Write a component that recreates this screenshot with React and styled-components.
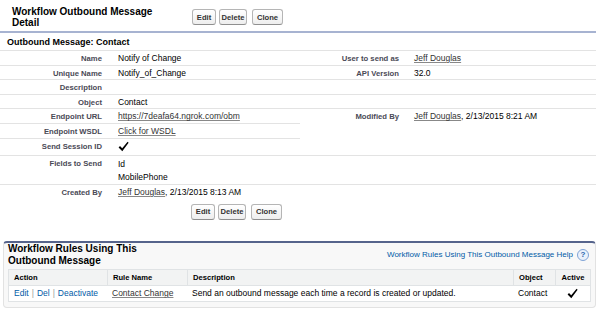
import React from 'react';
import styled, { createGlobalStyle } from 'styled-components';

const GlobalStyle = createGlobalStyle`
    body {
        margin: 0;
        background: #fff;
        font-family: "Liberation Sans", Arial, sans-serif;
        color: #000;
    }
`

const Page = styled.div`
    width: 596px;
`

const PageHeader = styled.div`
    display: flex;
    align-items: flex-start;
    height: 31px;
    border-bottom: 2px solid #a7b3d1;
`

const PageTitle = styled.h1`
    margin: 0;
    padding: 6px 0 0 12px;
    width: 160px;
    font-size: 10px;
    line-height: 11px;
    font-weight: bold;
    color: #000;
`

const ButtonRow = styled.div`
    display: flex;
    gap: 3px;
    margin-top: ${p => p.$top || 0}px;
    padding-left: ${p => p.$left || 0}px;
`

const Button = styled.button`
    box-sizing: border-box;
    width: ${p => p.$w}px;
    height: 16px;
    padding: 0;
    font-family: "Liberation Sans", Arial, sans-serif;
    font-size: 7.6px;
    font-weight: bold;
    color: #333;
    background: linear-gradient(#ffffff, #eeeeee);
    border: 1px solid #b5b5b5;
    border-bottom-color: #8f8f8f;
    border-radius: 3px;
`

const SectionTitle = styled.div`
    padding: 4px 0 2px 7px;
    font-size: 9px;
    line-height: 11px;
    font-weight: bold;
    border-bottom: 1px solid #e3e3e3;
`

const DetailGrid = styled.div`
    display: grid;
    grid-template-columns: 108px 192px 105px 1fr;
`

const Label = styled.div`
    padding: 2px 6px 0 0;
    text-align: right;
    font-size: 7.7px;
    line-height: 11.6px;
    font-weight: bold;
    color: #4a4a56;
    border-bottom: ${p => (p.$last ? 'none' : '1px solid #e3e3e3')};
    grid-row: ${p => (p.$span ? `span ${p.$span}` : 'auto')};
`

const Value = styled.div`
    padding: 2px 0 0 ${p => p.$pad || 10}px;
    font-size: 8.5px;
    line-height: ${p => p.$lh || 11.6}px;
    color: #000;
    border-bottom: ${p => (p.$last ? 'none' : '1px solid #e3e3e3')};
    grid-row: ${p => (p.$span ? `span ${p.$span}` : 'auto')};
`

const Link = styled.span`
    color: #333;
    text-decoration: underline;
    text-decoration-color: #888;
`

const Panel = styled.div`
    margin: 21px 0 0 3px;
    padding: 0 4px 5px 4px;
    background: #f8f8f8;
    border: 1px solid #e2e2e2;
    border-top: 2px solid #56648c;
    border-radius: 4px;
`

const PanelHeader = styled.div`
    display: flex;
    align-items: center;
    justify-content: space-between;
    margin-bottom: 2px;
`

const PanelTitle = styled.h2`
    margin: 0;
    width: 140px;
    font-size: 10px;
    line-height: 12px;
    font-weight: bold;
`

const HelpLink = styled.div`
    display: flex;
    align-items: center;
    gap: 4px;
    padding-right: 2px;
    font-size: 8px;
    color: #015ba7;
`

const HelpIcon = styled.span`
    box-sizing: border-box;
    display: inline-flex;
    align-items: center;
    justify-content: center;
    width: 12px;
    height: 12px;
    border-radius: 50%;
    border: 1px solid #7fa3d6;
    background: #eaf1fb;
    color: #2a62ad;
    font-size: 8px;
    font-weight: bold;
`

const RuleTable = styled.div`
    display: grid;
    grid-template-columns: 98px 80px 1fr 42px 35px;
    background: #fff;
    border: 1px solid #e0e3e5;
`

const HeadCell = styled.div`
    padding: 0 5px;
    height: 15px;
    line-height: 15px;
    font-size: 7.6px;
    font-weight: bold;
    color: #000;
    background: #f2f3f3;
    border-bottom: 1px solid #e0e3e5;
    border-left: ${p => (p.$first ? 'none' : '1px solid #e0e3e5')};
    text-align: ${p => p.$align || 'left'};
`

const Cell = styled.div`
    display: flex;
    align-items: center;
    justify-content: ${p => (p.$center ? 'center' : 'flex-start')};
    padding: 0 5px;
    height: 15px;
    font-size: 8.5px;
    color: #000;
    white-space: nowrap;
`

const ActionLink = styled.span`
    color: #015ba7;
`

const Sep = styled.span`
    color: #999;
    margin: 0 3px;
`

function Check() {
    return (
        <svg width="11" height="11" viewBox="0 0 11 11">
            <path d="M0.6 6.4 L2 5.1 L4.2 7.3 L9.6 0.8 L10.6 1.7 L4.3 10.2 Z" fill="#000" />
        </svg>
    )
}

function Buttons(props) {
    return (
        <ButtonRow $top={props.top} $left={props.left}>
            <Button $w={24}>Edit</Button>
            <Button $w={28}>Delete</Button>
            <Button $w={31} style={{ marginLeft: 2 }}>Clone</Button>
        </ButtonRow>
    )
}

function App() {
    return (
        <Page>
            <GlobalStyle />
            <PageHeader>
                <PageTitle>Workflow Outbound Message Detail</PageTitle>
                <Buttons top={9} left={20} />
            </PageHeader>

            <SectionTitle>Outbound Message: Contact</SectionTitle>
            <DetailGrid>
                <Label>Name</Label>
                <Value>Notify of Change</Value>
                <Label>User to send as</Label>
                <Value $pad={9}><Link>Jeff Douglas</Link></Value>

                <Label>Unique Name</Label>
                <Value>Notify_of_Change</Value>
                <Label>API Version</Label>
                <Value $pad={9}>32.0</Value>

                <Label>Description</Label>
                <Value></Value>
                <Label></Label>
                <Value></Value>

                <Label>Object</Label>
                <Value>Contact</Value>
                <Label></Label>
                <Value></Value>

                <Label>Endpoint URL</Label>
                <Value><Link>https://7deafa64.ngrok.com/obm</Link></Value>
                <Label $span={3}>Modified By</Label>
                <Value $span={3} $pad={9}><Link>Jeff Douglas</Link>, 2/13/2015 8:21 AM</Value>

                <Label>Endpoint WSDL</Label>
                <Value><Link>Click for WSDL</Link></Value>

                <Label>Send Session ID</Label>
                <Value><Check /></Value>

                <Label>Fields to Send</Label>
                <Value $lh={13}>Id<br />MobilePhone</Value>
                <Label></Label>
                <Value></Value>

                <Label $last>Created By</Label>
                <Value $last><Link>Jeff Douglas</Link>, 2/13/2015 8:13 AM</Value>
                <Label $last></Label>
                <Value $last></Value>
            </DetailGrid>
            <Buttons top={5} left={191} />

            <Panel>
                <PanelHeader>
                    <PanelTitle>Workflow Rules Using This Outbound Message</PanelTitle>
                    <HelpLink>
                        Workflow Rules Using This Outbound Message Help
                        <HelpIcon>?</HelpIcon>
                    </HelpLink>
                </PanelHeader>
                <RuleTable>
                    <HeadCell $first>Action</HeadCell>
                    <HeadCell>Rule Name</HeadCell>
                    <HeadCell>Description</HeadCell>
                    <HeadCell>Object</HeadCell>
                    <HeadCell $align="center">Active</HeadCell>

                    <Cell>
                        <ActionLink>Edit</ActionLink><Sep>|</Sep>
                        <ActionLink>Del</ActionLink><Sep>|</Sep>
                        <ActionLink>Deactivate</ActionLink>
                    </Cell>
                    <Cell><Link>Contact Change</Link></Cell>
                    <Cell>Send an outbound message each time a record is created or updated.</Cell>
                    <Cell>Contact</Cell>
                    <Cell $center><Check /></Cell>
                </RuleTable>
            </Panel>
        </Page>
    )
}

export default App;
